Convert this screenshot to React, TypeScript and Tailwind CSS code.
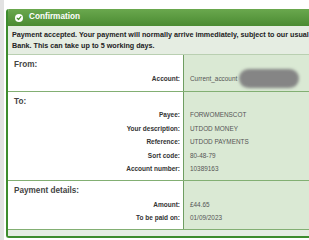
const font = { fontFamily: '"Liberation Sans", Arial, sans-serif' };

type Row = { label: string; value: string; blur?: boolean };

const sections: { title: string; rows: Row[] }[] = [
  { title: "From:", rows: [{ label: "Account:", value: "Current_account", blur: true }] },
  {
    title: "To:",
    rows: [
      { label: "Payee:", value: "FORWOMENSCOT" },
      { label: "Your description:", value: "UTDOD MONEY" },
      { label: "Reference:", value: "UTDOD PAYMENTS" },
      { label: "Sort code:", value: "80-48-79" },
      { label: "Account number:", value: "10389163" },
    ],
  },
  {
    title: "Payment details:",
    rows: [
      { label: "Amount:", value: "£44.65" },
      { label: "To be paid on:", value: "01/09/2023" },
    ],
  },
];

function CheckIcon() {
  return (
    <svg width="8" height="8" viewBox="0 0 16 16" className="shrink-0">
      <circle cx="8" cy="8" r="8" fill="#ffffff" />
      <path d="M4.2 8.3 L7 11 L11.8 5.4" fill="none" stroke="#4c8f34" strokeWidth="2.4" strokeLinecap="round" strokeLinejoin="round" />
    </svg>
  );
}

function Section({ title, rows, extra }: { title: string; rows: Row[]; extra: boolean }) {
  return (
    <div className="flex border-b border-[#82af73]">
      <div className={`w-[175px] shrink-0 bg-white pt-[4px] ${extra ? "pb-[5px]" : "pb-[4px]"}`}>
        <div className="h-[13px] flex items-center pl-[6px] text-[8.2px] font-bold text-[#444]">{title}</div>
        {rows.map((r) => (
          <div key={r.label} className="h-[13.5px] flex items-center justify-end pr-[3px] text-[6.5px] font-bold text-[#333]">
            {r.label}
          </div>
        ))}
      </div>
      <div className="flex-1 border-l border-[#6f9e62] bg-[#dae9d4] pt-[4px]">
        <div className="h-[13px]" />
        {rows.map((r) => (
          <div key={r.label} className="h-[13.5px] flex items-center pl-[6px] text-[6.4px] text-[#555] relative">
            {r.value}
            {r.blur && (
              <div className="absolute left-[55px] top-[-3px] w-[60px] h-[19px] rounded-full bg-[#858585] blur-[1.5px]" />
            )}
          </div>
        ))}
      </div>
    </div>
  );
}

export default function App() {
  return (
    <div className="w-[309px] h-[240px] overflow-hidden bg-white flex" style={font}>
      <div className="w-[4px] shrink-0 bg-[#e2e2e2]" />
      <div className="pl-[2px] pt-[9px]">
        <div className="w-[340px] rounded-tl-[3px] rounded-bl-[3px] border-l-2 border-b-2 border-[#3d8c2d] overflow-hidden">
          <div className="h-[17px] flex items-center gap-[6px] pl-[7px] bg-gradient-to-b from-[#6aa84e] to-[#4b8b32]">
            <CheckIcon />
            <span className="text-[8.2px] font-bold text-white">Confirmation</span>
          </div>
          <div className="bg-[#e5ede2] border-b border-[#b9cfb1] pt-[3px] pb-[3px] pl-[4px] text-[7.2px] font-bold text-[#222] leading-[11px] whitespace-nowrap">
            <div>Payment accepted. Your payment will normally arrive immediately, subject to our usual</div>
            <div>Bank. This can take up to 5 working days.</div>
          </div>
          {sections.map((s, i) => (
            <Section key={s.title} title={s.title} rows={s.rows} extra={i === 0} />
          ))}
          <div className="h-[6px] bg-[#e5ede2]" />
        </div>
      </div>
    </div>
  );
}
